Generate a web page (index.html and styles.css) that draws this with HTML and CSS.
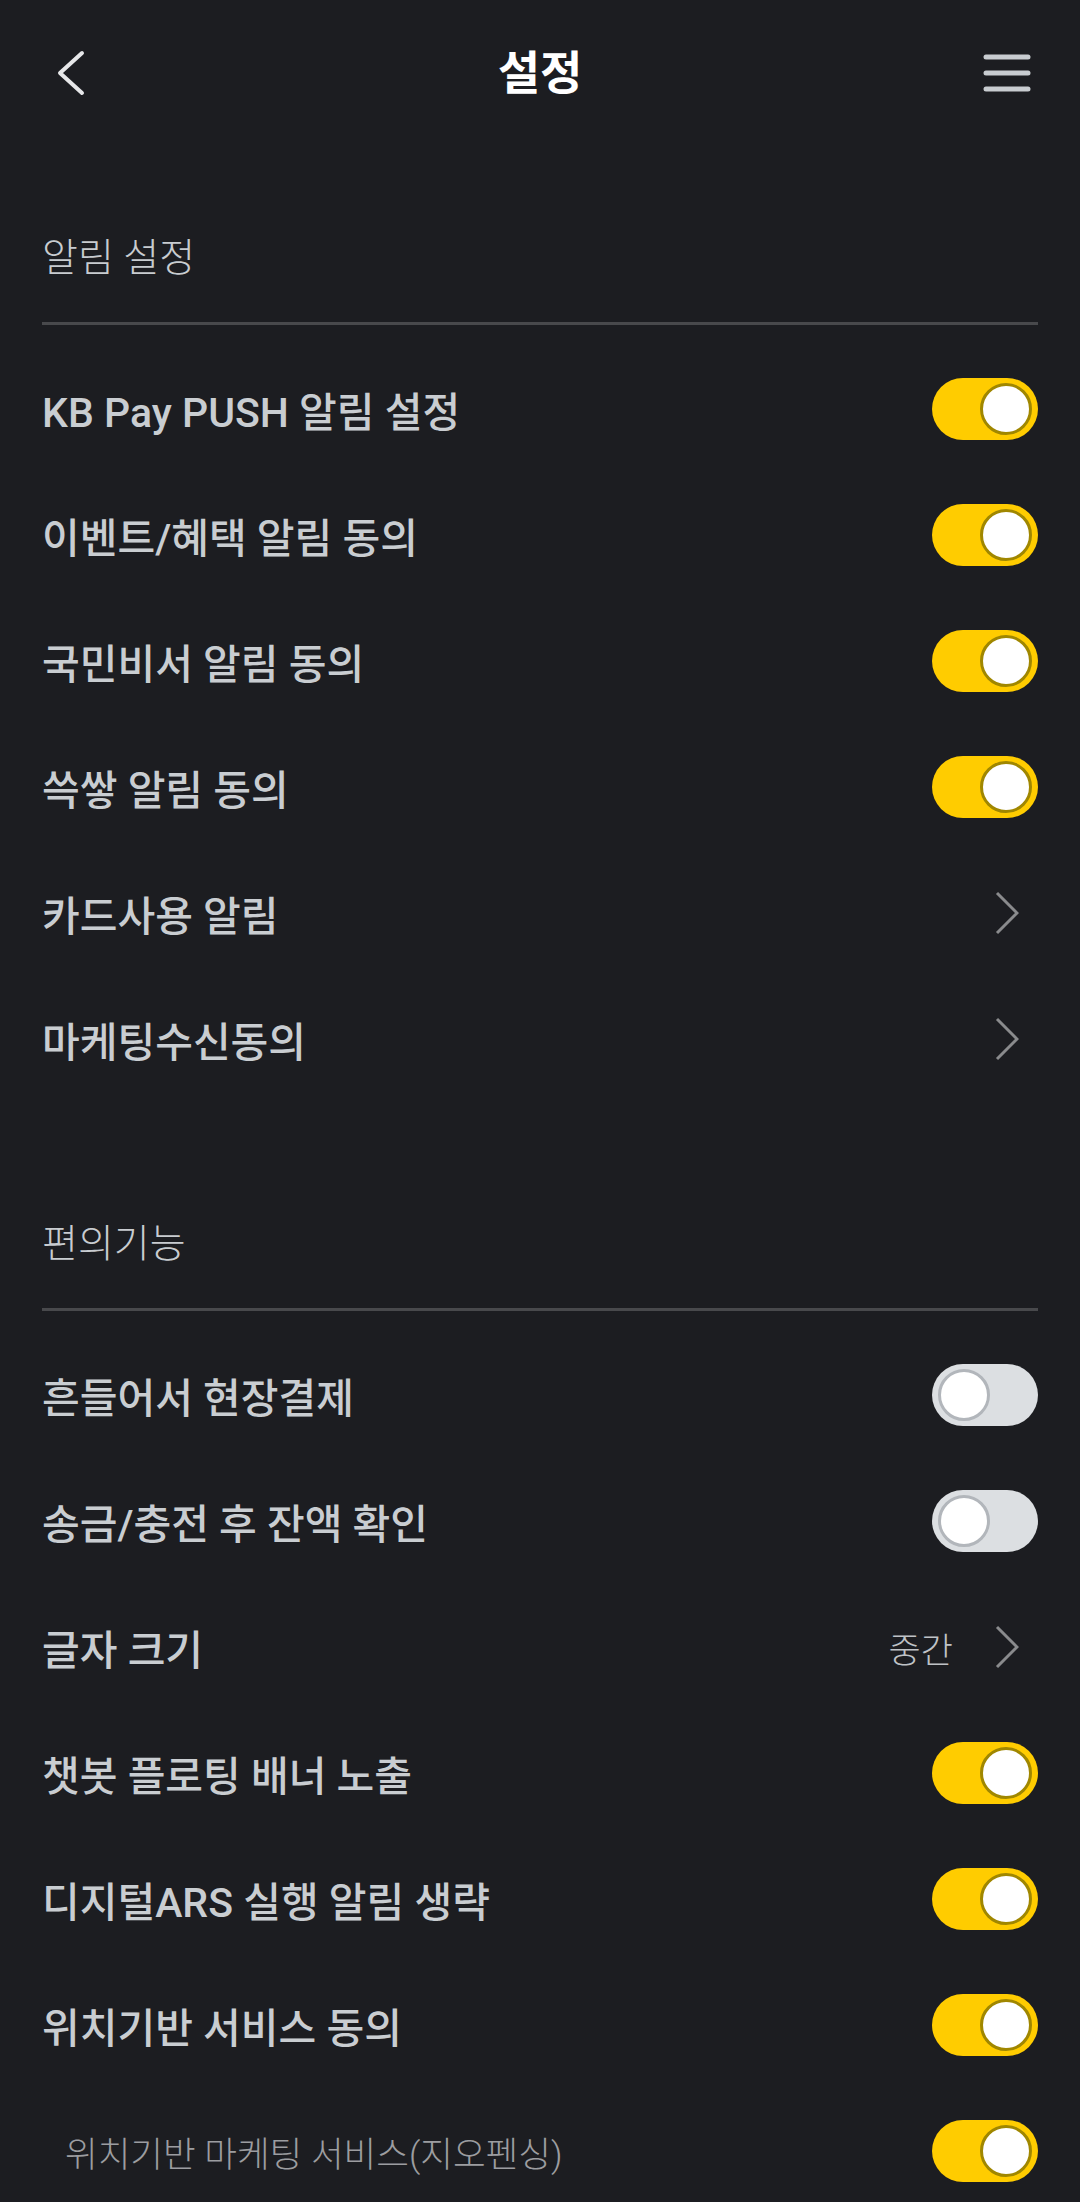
FILE: index.html
```html
<!DOCTYPE html>
<html lang="ko">
<head>
<meta charset="utf-8">
<title>설정</title>
<link rel="stylesheet" href="styles.css">
</head>
<body>
<header class="topbar">
  <svg class="back" width="30" height="48" viewBox="0 0 30 48"><polyline points="26,4 4,24 26,44" fill="none" stroke="#e6e7e9" stroke-width="4" stroke-linecap="round" stroke-linejoin="round"/></svg>
  <h1 class="title">설정</h1>
  <svg class="menu" width="50" height="40" viewBox="0 0 50 40"><g stroke="#c8ccd0" stroke-width="5" stroke-linecap="round"><line x1="4" y1="4" x2="46" y2="4"/><line x1="4" y1="20" x2="46" y2="20"/><line x1="4" y1="36" x2="46" y2="36"/></g></svg>
</header>

<section class="section first">
  <div class="section-title">알림 설정</div>
  <div class="row"><span class="label">KB Pay PUSH 알림 설정</span><span class="toggle on"><span class="knob"></span></span></div>
  <div class="row"><span class="label">이벤트/혜택 알림 동의</span><span class="toggle on"><span class="knob"></span></span></div>
  <div class="row"><span class="label">국민비서 알림 동의</span><span class="toggle on"><span class="knob"></span></span></div>
  <div class="row"><span class="label">쓱쌓 알림 동의</span><span class="toggle on"><span class="knob"></span></span></div>
  <div class="row"><span class="label">카드사용 알림</span><span class="chev"><svg width="24" height="44" viewBox="0 0 24 44"><polyline points="2,2 22,22 2,42" fill="none" stroke="#8a8b8d" stroke-width="3"/></svg></span></div>
  <div class="row"><span class="label">마케팅수신동의</span><span class="chev"><svg width="24" height="44" viewBox="0 0 24 44"><polyline points="2,2 22,22 2,42" fill="none" stroke="#8a8b8d" stroke-width="3"/></svg></span></div>
</section>

<section class="section second">
  <div class="section-title">편의기능</div>
  <div class="row"><span class="label">흔들어서 현장결제</span><span class="toggle"><span class="knob"></span></span></div>
  <div class="row"><span class="label">송금/충전 후 잔액 확인</span><span class="toggle"><span class="knob"></span></span></div>
  <div class="row"><span class="label">글자 크기</span><span class="value">중간</span><span class="chev"><svg width="24" height="44" viewBox="0 0 24 44"><polyline points="2,2 22,22 2,42" fill="none" stroke="#8a8b8d" stroke-width="3"/></svg></span></div>
  <div class="row"><span class="label">챗봇 플로팅 배너 노출</span><span class="toggle on"><span class="knob"></span></span></div>
  <div class="row"><span class="label">디지털ARS 실행 알림 생략</span><span class="toggle on"><span class="knob"></span></span></div>
  <div class="row"><span class="label">위치기반 서비스 동의</span><span class="toggle on"><span class="knob"></span></span></div>
  <div class="row sub"><span class="label">위치기반 마케팅 서비스(지오펜싱)</span><span class="toggle on"><span class="knob"></span></span></div>
</section>
</body>
</html>
```

FILE: styles.css
```css
* { box-sizing: border-box; }
html, body { margin: 0; padding: 0; }
body {
  background: #1c1d21;
  width: 1080px;
  height: 2202px;
  overflow: hidden;
  font-family: Roboto, "Noto Sans CJK KR", "Noto Sans", sans-serif;
  color: #c9cdd1;
}
.topbar {
  height: 146px;
  display: grid;
  grid-template-columns: 1fr auto 1fr;
  align-items: center;
  padding: 0 48px;
}
.back { display: block; justify-self: start; margin-left: 8px; }
.title {
  margin: 0;
  font-size: 46px;
  font-weight: 700;
  color: #ffffff;
  line-height: 1;
}
.menu { display: block; justify-self: end; }
.section { padding: 0 42px; }
.section.first { margin-top: 86px; }
.section.second { margin-top: 116px; }
.section-title {
  font-size: 39px;
  font-weight: 300;
  line-height: 52px;
  color: #c8ccd0;
  padding-bottom: 38px;
  border-bottom: 3px solid #48494c;
  margin-bottom: 21px;
}
.row {
  height: 126px;
  display: flex;
  align-items: center;
}
.label {
  flex: 1;
  font-size: 41px;
  font-weight: 500;
  color: #c9cdd1;
  white-space: nowrap;
}
.row.sub { padding-left: 23px; }
.row.sub .label {
  font-size: 35.5px;
  font-weight: 300;
  color: #9c9da0;
}
.value {
  font-size: 35px;
  font-weight: 300;
  color: #bfc2c6;
  margin-right: 42px;
}
.chev { display: flex; margin-right: 19px; }
.toggle {
  width: 106px;
  height: 62px;
  border-radius: 31px;
  background: #dcdfe2;
  display: flex;
  align-items: center;
  padding: 0 6px;
}
.knob {
  width: 52px;
  height: 52px;
  border-radius: 50%;
  background: #ffffff;
  border: 3px solid #b2b6bb;
}
.toggle.on {
  background: #ffcc00;
  justify-content: flex-end;
}
.toggle.on .knob { border-color: #a08700; }
```
